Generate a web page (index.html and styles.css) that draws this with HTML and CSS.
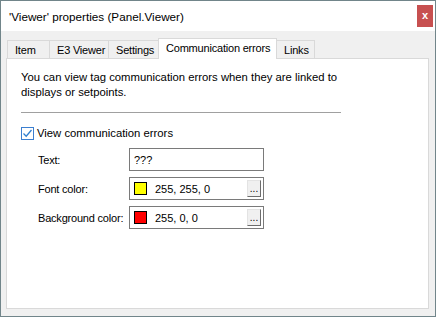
FILE: index.html
```html
<!DOCTYPE html>
<html lang="en">
<head>
    <meta charset="UTF-8">
    <title>'Viewer' properties (Panel.Viewer)</title>
    <link rel="stylesheet" href="styles.css">
</head>
<body>
    <div class="window">
        <div class="titlebar">
            <span class="title">'Viewer' properties (Panel.Viewer)</span>
            <div class="close">x</div>
        </div>
        <div class="body">
            <div class="tabs">
                <div class="tab">Item</div>
                <div class="tab">E3 Viewer</div>
                <div class="tab">Settings</div>
                <div class="tab active">Communication errors</div>
                <div class="tab">Links</div>
            </div>
            <div class="panel">
                <p class="intro">You can view tag communication errors when they are linked to displays or setpoints.</p>
                <div class="sep"></div>
                <label class="check">
                    <span class="box">
                        <svg width="11" height="11" viewBox="0 0 11 11"><path d="M1.5 5.5 L4.2 8.2 L9.5 2" fill="none" stroke="#2f7fd0" stroke-width="1.3"/></svg>
                    </span>
                    View communication errors
                </label>
                <div class="fields">
                    <span class="lbl">Text:</span>
                    <div class="input">???</div>
                    <span class="lbl">Font color:</span>
                    <div class="input color">
                        <span class="swatch yellow"></span>
                        <span class="val">255, 255, 0</span>
                        <span class="dots">...</span>
                    </div>
                    <span class="lbl">Background color:</span>
                    <div class="input color">
                        <span class="swatch red"></span>
                        <span class="val">255, 0, 0</span>
                        <span class="dots">...</span>
                    </div>
                </div>
            </div>
        </div>
    </div>
</body>
</html>
```

FILE: styles.css
```css
body {
    margin: 0;
    font-family: "Liberation Sans", Arial, sans-serif;
    font-size: 11px;
    color: #000;
}
.window {
    width: 434px;
    height: 315px;
    border: 1px solid #71858a;
    background-color: #f0f0f0;
    display: flex;
    flex-direction: column;
}
.titlebar {
    height: 30px;
    background-color: #fff;
    display: flex;
    align-items: flex-start;
    justify-content: space-between;
}
.title {
    margin: 9px 0 0 8px;
    font-size: 11.7px;
}
.close {
    width: 16px;
    height: 22px;
    margin: 4px 2px 0 0;
    background-color: #c75050;
    color: #fff;
    font-weight: bold;
    font-size: 11px;
    text-align: center;
    line-height: 20px;
}
.body {
    flex: 1;
    padding: 7px 6px 7px 5px;
    display: flex;
    flex-direction: column;
}
/* Tabs */
.tabs {
    display: flex;
    align-items: flex-end;
    height: 20px;
    padding-left: 1px;
    position: relative;
    z-index: 1;
}
.tab {
    height: 17px;
    line-height: 19px;
    padding: 0 6px 0 7px;
    border: 1px solid #d9d9d9;
    border-bottom: none;
    border-right: none;
    background-color: #f0f0f0;
    white-space: nowrap;
    font-size: 11px;
    letter-spacing: -0.2px;
}
.tab:nth-child(5) {
    border-right: 1px solid #d9d9d9;
}
.tab:first-child {
    width: 28px;
}
.tab:nth-child(2) {
    width: 45px;
}
.tab:nth-child(3) {
    width: 36px;
}
.tab:nth-child(5) {
    width: 24px;
}
.tab.active {
    width: 104px;
    height: 20px;
    line-height: 18px;
    background-color: #fff;
    border-right: 1px solid #d9d9d9;
    margin-bottom: -1px;
}
.tab.active + .tab {
    border-left: none;
}
.panel {
    flex: 1;
    background-color: #fff;
    border: 1px solid #d9d9d9;
    padding: 11px 14px 0 14px;
}
.intro {
    margin: 0;
    width: 320px;
    line-height: 15px;
    font-size: 11.3px;
}
.sep {
    width: 320px;
    height: 1px;
    background-color: #a0a0a0;
    margin-top: 12px;
}
.check {
    display: flex;
    align-items: center;
    margin-top: 13px;
    height: 14px;
    white-space: nowrap;
    font-size: 11.3px;
}
.box {
    width: 11px;
    height: 11px;
    border: 1px solid #3c7fd0;
    margin-right: 3px;
    display: flex;
}
.fields {
    display: grid;
    grid-template-columns: 91px 135px;
    row-gap: 6px;
    margin: 8px 0 0 17px;
    align-items: center;
    font-size: 11px;
}
.lbl {
    white-space: nowrap;
    letter-spacing: -0.2px;
}
.input {
    border: 1px solid #7a7a7a;
    box-sizing: border-box;
    height: 23px;
    padding-left: 4px;
    display: flex;
    align-items: center;
    font-size: 11px;
}
.input.color {
    padding-left: 4px;
    padding-right: 2px;
}
.swatch {
    width: 11px;
    height: 11px;
    border: 1px solid #000;
    margin-right: 8px;
}
.swatch.yellow {
    background-color: #ffff00;
}
.swatch.red {
    background-color: #ff0000;
}
.val {
    flex: 1;
}
.dots {
    width: 14px;
    height: 17px;
    box-sizing: border-box;
    background-color: #f0f0f0;
    border: 1px solid #e3e3e3;
    border-right-color: #6d6d6d;
    border-bottom-color: #6d6d6d;
    font-size: 10px;
    text-align: center;
    line-height: 15px;
}
```
